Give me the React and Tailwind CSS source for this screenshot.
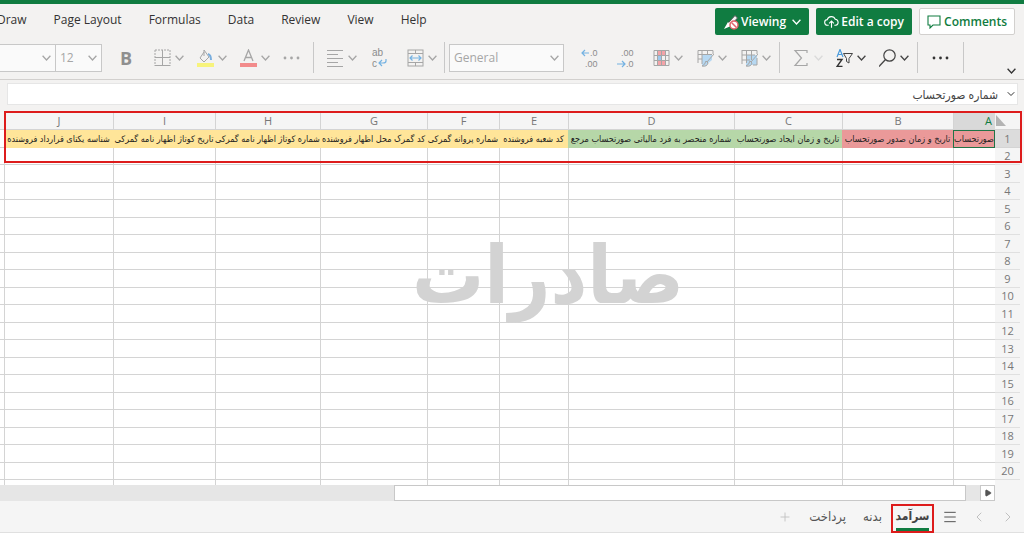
import { ChevronDown, ChevronLeft, ChevronRight, Menu, Plus, Play } from 'lucide-react';

const menuItems = ['Page Layout', 'Formulas', 'Data', 'Review', 'View', 'Help'];

// Sheet runs right to left, so column A comes first
const columns = [
  { letter: 'A', width: 'w-[42px]', fill: 'bg-[#ea9999]', title: 'صورتحساب' },
  { letter: 'B', width: 'w-[111px]', fill: 'bg-[#ea9999]', title: 'تاریخ و زمان صدور صورتحساب' },
  { letter: 'C', width: 'w-[108px]', fill: 'bg-[#b6d7a8]', title: 'تاریخ و زمان ایجاد صورتحساب' },
  { letter: 'D', width: 'w-[166px]', fill: 'bg-[#b6d7a8]', title: 'شماره منحصر به فرد مالیاتی صورتحساب مرجع' },
  { letter: 'E', width: 'w-[69px]', fill: 'bg-[#ffe599]', title: 'کد شعبه فروشنده' },
  { letter: 'F', width: 'w-[72px]', fill: 'bg-[#ffe599]', title: 'شماره پروانه گمرکی' },
  { letter: 'G', width: 'w-[107px]', fill: 'bg-[#ffe599]', title: 'کد گمرک محل اظهار فروشنده' },
  { letter: 'H', width: 'w-[105px]', fill: 'bg-[#ffe599]', title: 'شماره کوتاژ اظهار نامه گمرکی' },
  { letter: 'I', width: 'w-[102px]', fill: 'bg-[#ffe599]', title: 'تاریخ کوتاژ اظهار نامه گمرکی' },
  { letter: 'J', width: 'w-[109px]', fill: 'bg-[#ffe599]', title: 'شناسه یکتای قرارداد فروشنده' },
];

const rows = Array.from({ length: 20 }, (_, i) => i + 2);

const Arrow = ({ className = 'text-[#a6a6a6]' }) => (
  <svg viewBox="0 0 9 6" className={`w-[9px] h-[6px] shrink-0 ${className}`} fill="none" stroke="currentColor" strokeWidth="1.3">
    <path d="M.6 .8 4.5 5 8.4 .8" />
  </svg>
);

const Separator = () => <div className="w-px h-[31px] shrink-0 bg-[#c8c8c8]" />;

const Tool = ({ label, arrow, arrowClass, children }) => (
  <button aria-label={label} className="flex items-center gap-1 shrink-0">
    <svg viewBox="0 0 17 18" className="w-[17px] h-[18px]" fill="none" stroke="#a6a6a6" strokeWidth="1">
      {children}
    </svg>
    {arrow && <Arrow className={arrowClass} />}
  </button>
);

// Taller icon made of two short lines of text and an arrow
const TextTool = ({ label, children }) => (
  <button aria-label={label} className="shrink-0">
    <svg viewBox="0 0 18 26" className="w-[18px] h-[26px] font-['Liberation_Sans',sans-serif]" fontSize="9" fill="#8c8c8c">
      {children}
    </svg>
  </button>
);

const Dots = ({ label, color }) => (
  <Tool label={label}>
    <g fill={color} stroke="none">
      <circle cx="2" cy="9" r="1.4" />
      <circle cx="8.5" cy="9" r="1.4" />
      <circle cx="15" cy="9" r="1.4" />
    </g>
  </Tool>
);

const Select = ({ label, value, className }) => (
  <div className={`relative flex shrink-0 items-center h-[28px] bg-[#fafafa] border border-[#c8c8c8] ${className}`}>
    <select aria-label={label} defaultValue={value} className="appearance-none w-full h-full pl-1 bg-transparent text-[12px] text-[#a6a6a6] outline-none">
      <option>{value}</option>
    </select>
    <div className="absolute right-1 pointer-events-none"><Arrow /></div>
  </div>
);

const Ribbon = () => (
  <div className="flex items-center h-10 overflow-hidden border-b border-[#d2d0ce] pb-1 text-[#a6a6a6]">
    <div className="flex items-center shrink-0">
      <Select label="Font" value="" className="w-[56px] border-l-0" />
      <Select label="Font size" value="12" className="w-[46px] border-l-0" />
    </div>
    <button className="w-[52px] pr-1 shrink-0 text-[18px] font-bold leading-[20px] text-[#8f8f8f]">B</button>

    <div className="flex items-center gap-[13px] shrink-0">
      <Tool label="Borders" arrow>
        <path d="M1 1H16M1 1V16M16 1V16" strokeDasharray="2 1" />
        <path d="M8.5 1V16M1 8.5H16M.5 16.5H16.5" />
      </Tool>
      <Tool label="Fill color" arrow>
        <path d="M7 3 3 9l4 4 5-5-5-7v6" />
        <path d="M11 5q3 1 3 6" stroke="#79aede" strokeWidth="2" />
        <path d="M0 16H17" stroke="#f7f37c" strokeWidth="4" />
      </Tool>
      <Tool label="Font color" arrow>
        <path d="M4 12 8.5 1 13 12M5.5 8.5H11.5" strokeWidth="1.3" />
        <path d="M0 16H17" stroke="#f28b8b" strokeWidth="4" />
      </Tool>
      <Dots label="More font options" color="#a6a6a6" />
      <Separator />
      <Tool label="Alignment" arrow>
        <path d="M0 1.5H16M0 5.5H11M0 9.5H16M0 13.5H11M0 17.5H16" />
      </Tool>
    </div>

    <div className="flex items-center gap-[18px] shrink-0 pl-[14px]">
      <TextTool label="Wrap text">
        <text x="1" y="11" fontSize="10">ab</text>
        <text x="1" y="22" fontSize="10">c</text>
        <path d="M15 14v2q0 2-3 2H8M11 15l-3 3 3 3" fill="none" stroke="#74b2e2" strokeWidth="1.2" />
      </TextTool>
      <Tool label="Merge cells" arrow>
        <rect x="1" y="1" width="15" height="16" />
        <path d="M1 4.5H16M1 13.5H16M8.5 1V4.5M8.5 13.5V17" />
        <path d="M3 9H14M5.5 6.5 3 9l2.5 2.5M11.5 6.5 14 9l-2.5 2.5" stroke="#74b2e2" strokeWidth="1.2" />
      </Tool>
    </div>

    <div className="flex items-center gap-1 shrink-0 pl-[7px]">
      <Separator />
      <Select label="Number format" value="General" className="w-[115px]" />
    </div>

    <div className="flex items-center gap-[18px] shrink-0 pl-[17px]">
      <TextTool label="Increase decimal">
        <text x="9" y="11">.0</text>
        <text x="4" y="22">.00</text>
        <path d="M1 8H8M4 5 1 8l3 3" fill="none" stroke="#74b2e2" strokeWidth="1.2" />
      </TextTool>
      <TextTool label="Decrease decimal">
        <text x="4" y="11">.00</text>
        <text x="9" y="22">.0</text>
        <path d="M0 19H8M5 16l3 3-3 3" fill="none" stroke="#74b2e2" strokeWidth="1.2" />
      </TextTool>
      <div className="flex items-center gap-[14px]">
        <Tool label="Conditional formatting" arrow>
          <path d="M4.500 1H12.500V6H4.500ZM4.500 11H12.500V16H4.500Z" fill="#f4a3a8" stroke="none" />
          <path d="M4.500 6H8.500V11H4.500Z" fill="#9cc8ee" stroke="none" />
          <path d="M1 1.500H16V16.500H1ZM4.500 1V16M8.500 1V16M12.500 1V16M1 6.500H16M1 11.500H16" />
        </Tool>
        <Tool label="Format as table" arrow>
          <path d="M5 5H15V11L9 16H5Z" fill="#b6d8f2" stroke="none" />
          <path d="M1 14V1.500H16V5M1 5.500H15M5 1V15M10.500 1V5M1 10H5" />
          <path d="M17 5 10 13M9 12l2 2q-1 4-6 3 3-1 4-5Z" fill="#b6d8f2" />
        </Tool>
        <Tool label="Cell styles" arrow>
          <path d="M5 6H16V16H5Z" fill="#b6d8f2" stroke="none" />
          <path d="M1 1.500H16V5M1 1V15M1 6H14M1 11H9M5.500 1V14M10.500 1V11M16 9V16H12" />
          <path d="M17 5 10 13M9 12l2 2q-1 4-6 3 3-1 4-5Z" fill="#b6d8f2" />
        </Tool>
      </div>
    </div>

    <div className="flex items-center gap-[13px] shrink-0 pl-2">
      <Separator />
      <Tool label="Sum" arrow arrowClass="text-[#dadada]">
        <path d="M14 4V1.500H2L8.500 9 2 16.500H14V14" strokeWidth="1.2" />
      </Tool>
      <Tool label="Sort and filter" arrow arrowClass="text-[#444]">
        <path d="M1 8 4 .5 7 8M2 5.500H6" stroke="#4a9bdc" strokeWidth="1.2" />
        <path d="M1 10.500H6L1 17.500H6.500" stroke="#333" strokeWidth="1.4" />
        <path d="M7.500 4.500H16.500L13 9.500V14L10.500 12.500V9.500Z" stroke="#444" />
      </Tool>
      <Tool label="Find" arrow arrowClass="text-[#444]">
        <circle cx="10.500" cy="6.500" r="5.700" stroke="#444" strokeWidth="1.2" />
        <path d="M6.500 10.500 0 17.500" stroke="#444" strokeWidth="1.3" />
      </Tool>
    </div>
    <div className="flex items-center gap-[14px] shrink-0 pl-2">
      <Separator />
      <Dots label="More options" color="#333" />
      <Separator />
    </div>
    <button aria-label="Collapse ribbon" className="self-end pb-px ml-auto mr-2">
      <Arrow className="text-[#333]" />
    </button>
  </div>
);

const TopMenu = () => (
  <div className="flex items-center justify-between h-9 pr-[9px] pb-px">
    <nav className="flex items-center gap-[27px] text-[12px] text-[#333] pb-[3px] -ml-[3px]">
      <button className="shrink-0">Draw</button>
      {menuItems.map((item) => (
        <button key={item} className="whitespace-nowrap">{item}</button>
      ))}
    </nav>
    <div className="flex items-center gap-[7px] text-[12px] font-semibold text-white">
      <button className="flex items-center w-[94px] h-[27px] pl-[9px] pr-2 gap-[1px] rounded-[2px] bg-[#107c41]">
        <svg viewBox="0 0 16 16" className="w-4 h-4" fill="none">
          <path d="M3 11 5 8 11 1.500 13.500 4 7 11Z" fill="#f3f3f3" stroke="#555" />
          <path d="M0 15 4 8l3 4Z" fill="#fff" />
          <circle cx="10" cy="11" r="4" fill="#fff" stroke="#e0646a" strokeWidth="1.5" />
          <path d="m7.500 8.500 5 5" stroke="#e0646a" strokeWidth="1.5" />
        </svg>
        Viewing
        <Arrow className="ml-auto text-white" />
      </button>
      <button className="flex items-center justify-between w-[96px] h-[27px] px-2 rounded-[2px] bg-[#107c41] whitespace-nowrap">
        <svg viewBox="0 0 16 14" className="w-[15px] h-[14px]" fill="none" stroke="#fff" strokeWidth="1.2">
          <path d="M5 10.500H4A3 3 0 0 1 3.500 4.500 4.500 4.500 0 0 1 12 4a3.300 3.300 0 0 1 .5 6.500H11M8 13V6M5.500 8.500 8 6l2.500 2.500" />
        </svg>
        Edit a copy
      </button>
      <button className="flex items-center justify-between w-[96px] h-[27px] px-[7px] rounded-[2px] bg-white border border-[#d2d0ce] text-[#107c41]">
        <svg viewBox="0 0 14 14" className="w-[14px] h-[14px]" fill="none" stroke="currentColor" strokeWidth="1.1">
          <path d="M1 1H13V10H6L3 13V10H1Z" />
        </svg>
        Comments
      </button>
    </div>
  </div>
);

const Sheet = () => (
  <div className="relative">
    <div dir="rtl" className="h-[373px] overflow-hidden pr-1 bg-[#f5f5f5]">
      <table className="table-fixed w-full border-separate border-spacing-0 bg-white font-['DejaVu_Sans_Condensed','DejaVu_Sans',sans-serif]">
        <thead>
          <tr className="h-[18px] bg-[#f5f5f5] text-[11px] leading-[16px] text-[#777] font-['Open_Sans',sans-serif]">
            <th className="w-[25px] p-0 border-b border-[#d4d4d4]">
              <svg viewBox="0 0 10 11" className="w-[10px] h-[11px] ml-auto mr-[14px]" fill="#b4b4b4">
                <path d="M0 0 10 11H0Z" />
              </svg>
            </th>
            {columns.map(({ letter, width }) => (
              <th
                key={letter}
                className={`${width} p-0 border-b border-l border-[#d4d4d4] font-normal ${letter === 'A' ? 'bg-[#d9d9d9] text-[#107c41] pl-[28px]' : ''}`}
              >
                {letter}
              </th>
            ))}
            <th className="p-0 border-b border-[#d4d4d4]" />
          </tr>
        </thead>
        <tbody className="text-[9px] leading-[14px] text-[#222]">
          <tr className="h-[18px]">
            <th className="p-0 bg-[#dcdcdc] border-b border-[#d4d4d4] text-[11px] font-normal text-[#777] font-['Open_Sans',sans-serif]">1</th>
            {columns.map(({ letter, fill, title }) => (
              <td
                key={letter}
                className={`p-0 overflow-hidden text-center whitespace-nowrap ${fill} ${letter === 'A' ? 'ring-1 ring-inset ring-[#217346]' : ''}`}
              >
                {title}
              </td>
            ))}
            <td className="p-0 border-b border-[#d4d4d4]" />
          </tr>
          {rows.map((row) => (
            <tr key={row} className="odd:h-[18px] even:h-[17px]">
              <th className="p-0 bg-[#f5f5f5] border-b border-[#e0e0e0] text-[11px] font-normal text-[#777] font-['Open_Sans',sans-serif]">
                {row <= 20 ? row : ''}
              </th>
              {columns.map(({ letter }) => (
                <td key={letter} className="p-0 border-b border-l border-[#d4d4d4]" />
              ))}
              <td className="p-0 border-b border-[#d4d4d4]" />
            </tr>
          ))}
        </tbody>
      </table>
    </div>
    <div className="absolute -top-px left-1 right-[2px] h-[52px] border-2 border-[#dd1c1c]" />
    <div dir="rtl" className="absolute top-[104px] left-[412px] text-[80px] leading-[120px] font-bold text-[#d3d3d3] whitespace-nowrap font-['DejaVu_Sans_Condensed','DejaVu_Sans',sans-serif]">
      صادرات
    </div>
  </div>
);

const ScrollBar = () => (
  <div className="flex h-4 bg-[#f5f5f5] pr-[29px]">
    <div className="flex flex-1 justify-end gap-[14px] bg-[#e6e6e6]">
      <div className="w-23/40 bg-white border border-[#c8c8c8]" />
      <button aria-label="Scroll right" className="flex items-center justify-center w-[15px] bg-white border border-[#c8c8c8]">
        <Play size={8} fill="#555" stroke="#555" />
      </button>
    </div>
  </div>
);

const SheetTabs = () => (
  <div dir="rtl" className="flex items-center h-8 pr-2 bg-[#f5f5f5] border-b border-[#e0e0e0] text-[13px] text-[#555]">
    <button aria-label="Next sheet" className="ml-[13px] text-[#c0c0c0]"><ChevronRight size={16} strokeWidth={1.5} /></button>
    <button aria-label="Previous sheet" className="ml-[13px] text-[#c0c0c0]"><ChevronLeft size={16} strokeWidth={1.5} /></button>
    <button aria-label="All sheets" className="ml-2"><Menu size={16} strokeWidth={1.5} /></button>
    <button className="flex justify-center w-[43px] h-[29px] mt-1 ml-[9px] border-2 border-[#dd1c1c] text-[12px] font-bold text-[#444]">
      <span className="h-[25px] leading-[20px] border-b-3 border-[#107c41]">سرآمد</span>
    </button>
    <button className="ml-[17px]">بدنه</button>
    <button className="ml-[17px]">پرداخت</button>
    <button aria-label="New sheet" className="text-[#c0c0c0]"><Plus size={14} strokeWidth={1.5} /></button>
  </div>
);

export default function App() {
  return (
    <div className="min-h-screen overflow-hidden bg-white font-['Open_Sans','DejaVu_Sans_Condensed','DejaVu_Sans',sans-serif]">
      <div className="bg-[#f3f2f1]">
        <div className="h-1 bg-[#107c41]" />
        <TopMenu />
        <Ribbon />
        <div className="flex items-center pt-[3px] pb-[7px] pl-[7px] pr-[6px]">
          <div className="flex items-center w-full h-[22px] gap-[7px] bg-white border border-[#e6e6e6]">
            <input
              aria-label="Formula bar"
              dir="rtl"
              defaultValue="شماره صورتحساب"
              className="flex-1 h-full text-[12px] text-[#444] outline-none"
            />
            <ChevronDown size={12} className="text-[#333]" />
          </div>
        </div>
      </div>
      <Sheet />
      <ScrollBar />
      <SheetTabs />
    </div>
  );
}
